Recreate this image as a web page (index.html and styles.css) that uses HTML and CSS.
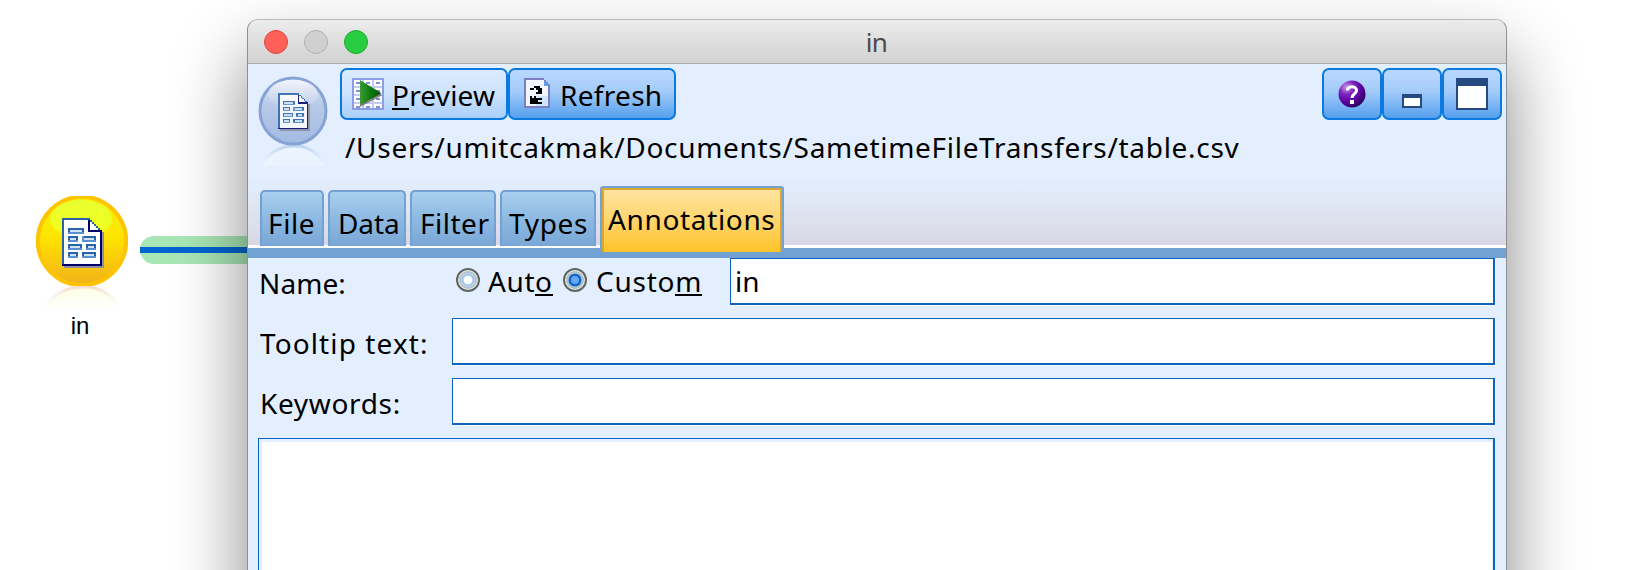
FILE: index.html
```html
<!DOCTYPE html>
<html lang="en">
<head>
<meta charset="utf-8">
<title>in</title>
<link rel="stylesheet" href="styles.css">
</head>
<body>
<svg class="defs" width="0" height="0" aria-hidden="true">
  <defs>
    <symbol id="doc" viewBox="0 0 21 25">
      <g shape-rendering="crispEdges">
        <path d="M1 24h19M20 7v18" stroke="#8b8f9e" stroke-width="2" fill="none"/>
        <path d="M0 0h14v1h1v1h1v1h1v1h1v1h1v1h1v18H0z" fill="#2a64a8"/>
        <path d="M1 1h12v6h6v16H1z" fill="#fff"/>
        <path d="M14 2h1v1h1v1h1v1h1v1h-4z" fill="#fff"/>
        <path d="M13 1h1v5h6v18H0v-1h19V7h-6z" fill="#00006c"/>
        <g fill="#2a64a8">
          <path d="M3 5h8v3H3zM3 9h5v3H3zM10 9h7v3h-7zM3 13h7v3H3zM12 13h5v3h-5zM3 17h5v3H3zM10 17h7v3h-7z"/>
        </g>
        <path d="M4 6h6v1H4zM4 10h3v1H4zM11 10h5v1h-5zM4 14h5v1H4zM13 14h3v1h-3zM4 18h3v1H4zM11 18h5v1h-5z" fill="#cfe2f8"/>
        <path d="M3 7h8v1H3zM10 9h1v3h-1zM3 11h5v1H3zM10 11h7v1h-7zM3 15h7v1H3zM12 15h5v1h-5zM3 19h5v1H3zM10 19h7v1h-7z" fill="#5b8fcf"/>
      </g>
    </symbol>
    <linearGradient id="gold" x1="0" y1="0" x2="0" y2="1">
      <stop offset="0" stop-color="#f2f000"/><stop offset=".45" stop-color="#ffe500"/><stop offset="1" stop-color="#f2b01a"/>
    </linearGradient>
    <linearGradient id="lime" x1="0" y1="0" x2="0" y2="1">
      <stop offset="0" stop-color="#e9ff30"/><stop offset=".75" stop-color="#efff20"/><stop offset="1" stop-color="#f8f400" stop-opacity=".3"/>
    </linearGradient>
    <linearGradient id="steel" x1="0" y1="0" x2="0" y2="1">
      <stop offset="0" stop-color="#dfe6f5"/><stop offset=".4" stop-color="#b9cae8"/><stop offset="1" stop-color="#a2bbe2"/>
    </linearGradient>
    <linearGradient id="sheen" x1="0" y1="0" x2="0" y2="1">
      <stop offset="0" stop-color="#f2f4fb"/><stop offset="1" stop-color="#cdd9ef" stop-opacity=".2"/>
    </linearGradient>
    <linearGradient id="fadeGold" x1="0" y1="0" x2="0" y2="1">
      <stop offset="0" stop-color="#f7ddcf"/><stop offset="1" stop-color="#fff" stop-opacity="0"/>
    </linearGradient>
    <linearGradient id="fadeLime" x1="0" y1="0" x2="0" y2="1">
      <stop offset="0" stop-color="#fbffe4"/><stop offset="1" stop-color="#fff"/>
    </linearGradient>
    <linearGradient id="fadeBlue" x1="0" y1="0" x2="0" y2="1">
      <stop offset="0" stop-color="#bcd4f1"/><stop offset="1" stop-color="#e3efff" stop-opacity="0"/>
    </linearGradient>
    <radialGradient id="violet" cx=".3" cy=".25" r=".8">
      <stop offset="0" stop-color="#c79be0"/><stop offset=".35" stop-color="#7c22bd"/><stop offset=".7" stop-color="#5a009c"/><stop offset="1" stop-color="#2c0058"/>
    </radialGradient>
    <linearGradient id="play" x1="0" y1="0" x2="1" y2="0">
      <stop offset="0" stop-color="#3c9a34"/><stop offset=".5" stop-color="#0d7a0d"/><stop offset="1" stop-color="#034a08"/>
    </linearGradient>
  </defs>
</svg>

<main class="canvas">
  <div class="connector"></div>
  <div class="node">
    <svg class="node-icon" width="92" height="116" viewBox="0 0 92 116">
      <path d="M7 114Q20 92 46 91T85 114" fill="url(#fadeLime)" stroke="url(#fadeGold)" stroke-width="3"/>
      <svg width="92" height="90" viewBox="0 0 92 90"><circle cx="46" cy="45" r="44.2" fill="url(#gold)" stroke="#ffc400" stroke-width="4"/>
      <ellipse cx="45" cy="23" rx="31" ry="19" fill="url(#lime)"/></svg>
      <use href="#doc" x="26" y="22" width="42" height="50"/>
    </svg>
    <span class="node-label">in</span>
  </div>

  <section class="window">
    <header class="titlebar">
      <div class="lights"><i class="light red"></i><i class="light gray"></i><i class="light green"></i></div>
      <span class="title">in</span>
    </header>

    <div class="head">
      <div class="toolbar">
        <svg class="head-icon" width="70" height="92" viewBox="0 0 70 92">
          <path d="M3 90Q14 71 35 70T67 90" fill="#eaf3fe" stroke="url(#fadeBlue)" stroke-width="3"/>
          <circle cx="35" cy="35" r="33" fill="url(#steel)" stroke="#87a3d6" stroke-width="3"/>
          <ellipse cx="35" cy="18" rx="25" ry="14" fill="url(#sheen)"/>
          <use href="#doc" x="20" y="17" width="32" height="38" opacity=".85"/>
        </svg>
        <div class="info">
          <div class="actions">
            <button class="btn light-btn">
              <svg width="32" height="32" viewBox="0 0 16 16" shape-rendering="crispEdges">
                <path d="M0 0h16v16H0z" fill="#8c9ce6"/>
                <path d="M1 1h14v14H1z" fill="#fff"/>
                <path d="M1 4h14v1H1zM1 8h14v1H1zM1 12h14v1H1zM5 1h1v14H5zM10 1h1v14h-1z" fill="#c3cbf4"/>
                <path d="M2 2h2v1H2zM7 2h2v1H7zM12 2h2v1h-2zM2 6h2v1H2zM12 6h2v1h-2zM2 10h2v1H2zM12 10h2v1h-2zM2 14h2v1H2zM7 14h2v1H7zM12 14h2v1h-2z" fill="#7f90df"/>
                <g shape-rendering="auto"><path d="M4 1.5v13L15 8.7z" fill="#555" opacity=".7"/><path d="M4 1v12.5L14.7 7.6z" fill="url(#play)"/></g>
              </svg>
              <span class="t-preview"><u>P</u>review</span>
            </button>
            <button class="btn">
              <svg class="refresh" width="26" height="30" viewBox="0 0 13 15" shape-rendering="crispEdges">
                <path d="M0 0h10v1h1v1h1v1h1v12H0z" fill="#7e7fc0"/>
                <path d="M1 1h9v3h2v10H1z" fill="#f1f6ff"/>
                <path d="M10 1v3h2V3h-1V2h-1z" fill="#56a5ef"/>
                <path d="M6 9h6v5H6z" fill="#cfe6ff"/>
                <path d="M5 4h3v1h1v3H6V7h1V6H6V5H5v1H3V5h2zM3 9h1v1h1V9h1v1h3v1H7v1h2v1H3z" fill="#000"/>
              </svg>
              <span class="t-refresh">Refresh</span>
            </button>
          </div>
          <div class="path">/Users/umitcakmak/Documents/SametimeFileTransfers/table.csv</div>
        </div>
        <div class="tools">
          <button class="btn tool">
            <svg width="28" height="28" viewBox="0 0 28 28"><circle cx="14" cy="14" r="13.5" fill="url(#violet)"/><path d="M9.5 10.5C9.5 5.5 18.5 5.5 18.5 10.5C18.5 14 14 13.5 14 18" fill="none" stroke="#fff" stroke-width="3"/><path d="M12 20h4v4h-4z" fill="#fff"/></svg>
          </button>
          <button class="btn tool">
            <svg class="mini" width="20" height="14" viewBox="0 0 20 14"><path d="M0 0h20v14H0z" fill="#264a80"/><path d="M2 4h16v8H2z" fill="#fff"/></svg>
          </button>
          <button class="btn tool">
            <svg width="32" height="32" viewBox="0 0 32 32"><path d="M0 0h32v32H0z" fill="#264a80"/><path d="M2 8h28v22H2z" fill="#fff"/></svg>
          </button>
        </div>
      </div>
      <nav class="tabs">
        <div class="tab file">File</div>
        <div class="tab data">Data</div>
        <div class="tab filter">Filter</div>
        <div class="tab types">Types</div>
        <div class="tab active">Annotations</div>
      </nav>
    </div>
    <div class="rule"></div>

    <form class="form">
      <div class="row">
        <span class="label t-name">Name:</span>
        <div class="choices">
          <svg class="radio" width="24" height="24" viewBox="0 0 24 24"><circle cx="12" cy="12" r="11" fill="#e5ecea" stroke="#5f6665" stroke-width="2"/><circle cx="12" cy="12" r="8" fill="#d5e6f7" stroke="#b3c3c8" stroke-width="2"/><circle cx="12" cy="12" r="5.5" fill="#fff" stroke="#9cc3ea" stroke-width="2"/></svg>
          <span class="t-auto">Aut<u>o</u></span>
          <svg class="radio" width="24" height="24" viewBox="0 0 24 24"><circle cx="12" cy="12" r="11" fill="#e5ecea" stroke="#5f6665" stroke-width="2"/><circle cx="12" cy="12" r="8" fill="#d8e6ed" stroke="#b3bfbf" stroke-width="2"/><circle cx="12" cy="12" r="5.3" fill="#65a6f5" stroke="#1265cc" stroke-width="2.6"/></svg>
          <span class="t-custom">Custo<u>m</u></span>
        </div>
        <div class="field name">in</div>
      </div>
      <div class="row"><span class="label t-tooltip">Tooltip text:</span><div class="field"></div></div>
      <div class="row"><span class="label t-keywords">Keywords:</span><div class="field"></div></div>
      <div class="area"></div>
    </form>
  </section>
</main>
</body>
</html>
```
FILE: styles.css
```css
* { box-sizing: border-box; }

body {
  margin: 0;
  background: #fff;
  color: #000;
  font: 28px/40px "Noto Sans", "Open Sans", sans-serif;
  overflow: hidden;
}

svg { display: block; flex: none; }
.defs { position: absolute; }

.canvas {
  position: relative;
  width: 1646px;
  height: 570px;
  overflow: hidden;
}

.connector {
  position: absolute;
  left: 140px;
  top: 236px;
  width: 120px;
  height: 28px;
  padding-top: 11px;
  border-radius: 14px 0 0 14px;
  background: #a9e6b6;
}

.connector::before {
  content: "";
  display: block;
  height: 6px;
  background: #0065d0;
}

.node {
  position: absolute;
  left: 36px;
  top: 196px;
  width: 92px;
  display: flex;
  flex-direction: column;
  align-items: center;
}

.node-label {
  margin: -1px 4px 0 0;
  font: 24px/30px "Liberation Sans", Arial, sans-serif;
}

/* Dialog window */
.window {
  position: absolute;
  left: 247px;
  top: 19px;
  width: 1260px;
  height: 760px;
  border: 1px solid #8f8f8f;
  border-top-color: #b9b9b9;
  border-radius: 11px 11px 0 0;
  background: #e3efff;
  box-shadow: 0 38px 72px rgba(0, 0, 0, .48);
}

.titlebar {
  display: grid;
  grid-template-columns: 1fr auto 1fr;
  align-items: center;
  height: 44px;
  padding-left: 16px;
  border-bottom: 1px solid #acacac;
  border-radius: 10px 10px 0 0;
  background: linear-gradient(#ececec, #d2d2d2);
}

.lights { display: flex; gap: 16px; }
.light { width: 24px; height: 24px; border-radius: 50%; border: 1px solid; }
.red { background: #ff6058; border-color: #e0443e; }
.gray { background: #d0d0d0; border-color: #b0b0b0; }
.green { background: #28cd41; border-color: #1aab29; }

.title {
  margin-left: -17px;
  font-size: 26px;
  letter-spacing: -.6px;
  color: #4b4b4b;
}

.head {
  display: flex;
  flex-direction: column;
  justify-content: space-between;
  height: 184px;
  background: linear-gradient(#e3efff 0 110px, #dfe5f2 145px, #d8d6e4 181px);
  border-bottom: 3px solid #fff;
}

.toolbar { display: flex; padding: 4px 4px 0 10px; }
.head-icon { margin: 8px 12px 0 0; }
.info { flex: 1; }
.actions, .tools { display: flex; }

.btn {
  display: flex;
  align-items: center;
  width: 168px;
  height: 52px;
  padding: 0 0 0 14px;
  border: 2px solid #0a7ae0;
  border-radius: 7px;
  background: linear-gradient(#bad8fd, #a3cbfa 45%, #559fec);
  color: inherit;
  font: inherit;
}

.light-btn { padding-left: 10px; background: linear-gradient(#dcebfe, #cfe3fd 45%, #a9d0fa); }
.btn span { height: 40px; margin-top: 1px; white-space: nowrap; }
.t-preview { margin-left: 8px; letter-spacing: .2px; }
.t-refresh { margin-left: 10px; letter-spacing: .3px; }
.refresh { margin-top: -2px; }
.tool { width: 60px; padding: 0; justify-content: center; }
.mini { margin-top: 14px; }

u {
  text-decoration: none;
  box-shadow: inset 0 -2px #000;
  display: inline-block;
  height: 35px;
  line-height: 40px;
  vertical-align: top;
}

.path { margin: 7px 0 0 5px; letter-spacing: .7px; white-space: nowrap; }

.tabs {
  display: flex;
  align-items: flex-end;
  gap: 4px;
  padding-left: 12px;
  height: 59px;
}

.tab {
  height: 56px;
  margin-bottom: -1px;
  padding: 11px 0 0 8px;
  border: 2px solid #72a1d3;
  border-bottom: 0;
  border-radius: 5px 5px 0 0;
  background: linear-gradient(#a8cfef, #8db9e2 50%, #79a7d6);
}

.file { width: 64px; letter-spacing: .6px; padding-left: 6px; }
.data { width: 78px; letter-spacing: -.1px; padding-left: 8px; }
.filter { width: 86px; letter-spacing: .5px; }
.types { width: 96px; letter-spacing: .7px; padding-left: 7px; }

.active {
  align-self: flex-start;
  position: relative;
  width: 184px;
  height: 66px;
  margin: 0;
  padding: 11px 0 0 6px;
  letter-spacing: .65px;
  border-radius: 3px 3px 0 0;
  background: linear-gradient(#ffe5a4, #ffd56d 50%, #ffc42a);
  box-shadow: inset 2px 2px #dba72e, inset -2px 0 #dba72e;
}

.rule { height: 10px; background: #72a1d3; }

.form { display: flex; flex-direction: column; padding: 0 11px 0 10px; }

.row {
  display: flex;
  height: 47px;
  margin-bottom: 13px;
}

.label { width: 194px; padding: 5px 0 0 2px; white-space: nowrap; }
.t-name { padding-left: 1px; letter-spacing: .1px; }
.t-tooltip { letter-spacing: 1.1px; }
.t-keywords { letter-spacing: .65px; }

.choices { display: flex; width: 278px; padding: 3px 0 0 4px; }
.radio { margin-top: 7px; }
.t-auto { width: 75px; margin: 0 0 0 8px; letter-spacing: .6px; }
.t-custom { margin-left: 9px; letter-spacing: .75px; }
.choices + .field { padding: 2px 0 0 4px; }

.field {
  flex: 1;
  height: 47px;
  background: #fff;
  border: solid #0d63bd;
  border-width: 1px 2px 2px 1px;
  box-shadow: 1px 1px #f6faff;
}

.area {
  height: 300px;
  border: solid #0d63bd;
  border-width: 1px 2px 2px 1px;
  background: #fff;
  box-shadow: inset 3px 3px #e3efff, inset -1px 0 #e3efff;
}
```
